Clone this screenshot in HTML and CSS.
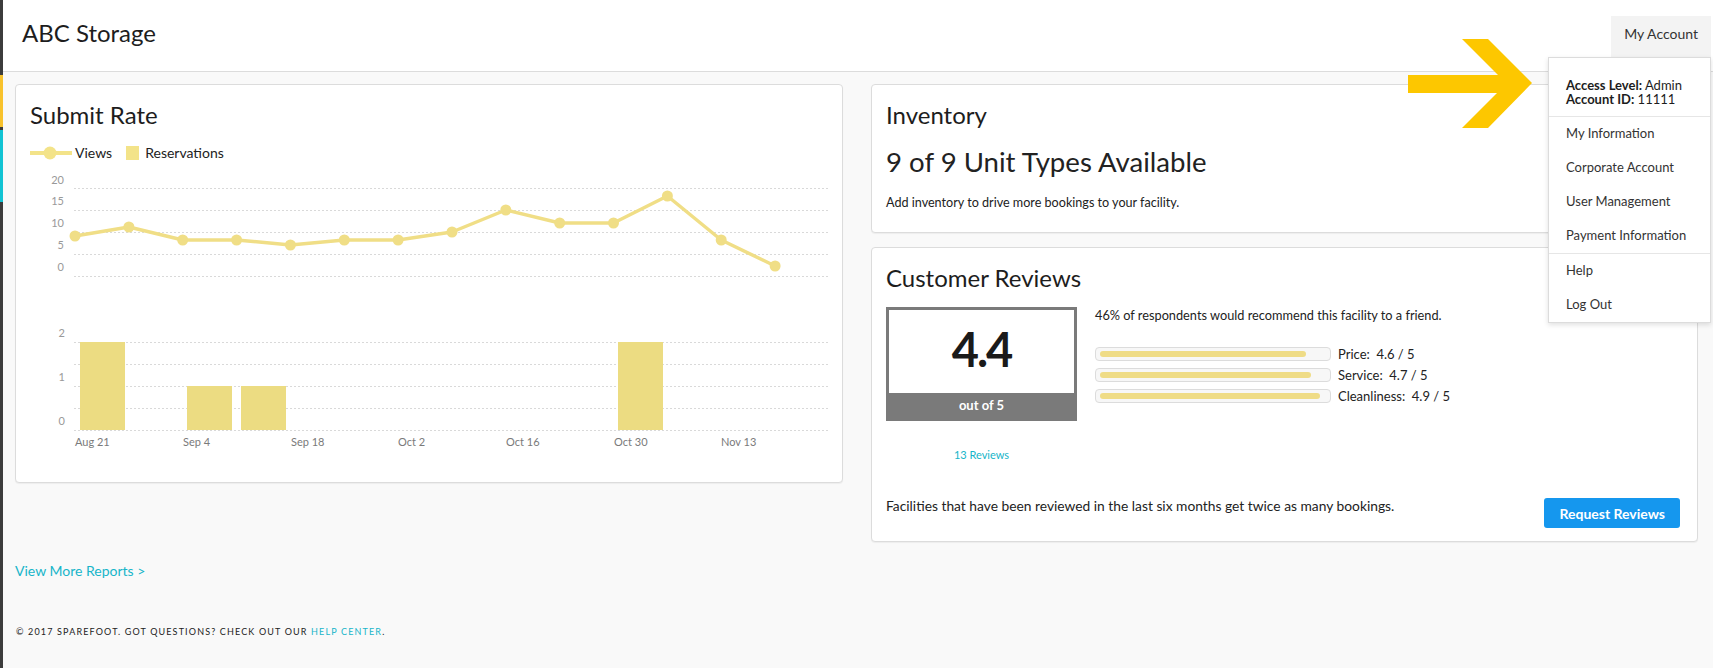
FILE: index.html
```html
<!DOCTYPE html>
<html lang="en">
<head>
  <meta charset="UTF-8">
  <title>ABC Storage - Dashboard</title>
  <link rel="stylesheet" href="styles.css">
</head>
<body>

<div class="app">
  <div class="rail">
    <span class="rail-yellow"></span>
    <span class="rail-cyan"></span>
  </div>

  <div class="main">
    <header class="topbar">
      <h1 class="brand">ABC Storage</h1>
      <div class="account-tab">My Account</div>
    </header>

    <div class="content">
      <div class="columns">
        <section class="card chart-card">
          <h2>Submit Rate</h2>
          <div class="legend">
            <svg class="legend-line" width="42" height="16" viewBox="0 0 42 16">
              <line x1="0" y1="8" x2="42" y2="8" stroke="#f3e389" stroke-width="4"/>
              <circle cx="20" cy="8" r="6.5" fill="#f3e389"/>
            </svg>
            <span>Views</span>
            <span class="legend-box"></span>
            <span>Reservations</span>
          </div>

          <svg class="chart" width="798" height="288" viewBox="0 0 798 288">
            <g class="grid">
              <line x1="44" y1="21.5" x2="798" y2="21.5"/>
              <line x1="44" y1="43.5" x2="798" y2="43.5"/>
              <line x1="44" y1="65.5" x2="798" y2="65.5"/>
              <line x1="44" y1="87.5" x2="798" y2="87.5"/>
              <line x1="44" y1="109.5" x2="798" y2="109.5"/>
              <line x1="44" y1="175.5" x2="798" y2="175.5"/>
              <line x1="44" y1="197.5" x2="798" y2="197.5"/>
              <line x1="44" y1="219.5" x2="798" y2="219.5"/>
              <line x1="44" y1="241.5" x2="798" y2="241.5"/>
              <line x1="44" y1="263.5" x2="798" y2="263.5"/>
            </g>
            <g class="y-labels">
              <text x="34" y="17">20</text>
              <text x="34" y="38">15</text>
              <text x="34" y="60">10</text>
              <text x="34" y="82">5</text>
              <text x="34" y="104">0</text>
              <text x="35" y="170">2</text>
              <text x="35" y="214">1</text>
              <text x="35" y="258">0</text>
            </g>

            <!-- views -->
            <polyline class="views-line" points="45,69 98.9,60 152.7,73 206.6,73 260.4,78 314.3,73 368.1,73 422,65 475.8,43 529.7,56 583.5,56 637.4,29 691.2,73 745.1,99"/>
            <g class="views-dots">
              <circle cx="45" cy="69" r="5.5"/>
              <circle cx="98.9" cy="60" r="5.5"/>
              <circle cx="152.7" cy="73" r="5.5"/>
              <circle cx="206.6" cy="73" r="5.5"/>
              <circle cx="260.4" cy="78" r="5.5"/>
              <circle cx="314.3" cy="73" r="5.5"/>
              <circle cx="368.1" cy="73" r="5.5"/>
              <circle cx="422" cy="65" r="5.5"/>
              <circle cx="475.8" cy="43" r="5.5"/>
              <circle cx="529.7" cy="56" r="5.5"/>
              <circle cx="583.5" cy="56" r="5.5"/>
              <circle cx="637.4" cy="29" r="5.5"/>
              <circle cx="691.2" cy="73" r="5.5"/>
              <circle cx="745.1" cy="99" r="5.5"/>
            </g>

            <!-- reservations -->
            <g class="bars">
              <rect x="50" y="175" width="45" height="88"/>
              <rect x="157" y="219" width="45" height="44"/>
              <rect x="211" y="219" width="45" height="44"/>
              <rect x="588" y="175" width="45" height="88"/>
            </g>

            <g class="x-labels">
              <text x="45" y="279">Aug 21</text>
              <text x="153" y="279">Sep 4</text>
              <text x="261" y="279">Sep 18</text>
              <text x="368" y="279">Oct 2</text>
              <text x="476" y="279">Oct 16</text>
              <text x="584" y="279">Oct 30</text>
              <text x="691" y="279">Nov 13</text>
            </g>
          </svg>
        </section>

        <div class="stack">
          <section class="card inventory-card">
            <h2>Inventory</h2>
            <p class="big-stat">9 of 9 Unit Types Available</p>
            <p class="note">Add inventory to drive more bookings to your facility.</p>
          </section>

          <section class="card reviews-card">
            <h2>Customer Reviews</h2>
            <div class="review-body">
              <div class="score-col">
                <div class="score-box">
                  <div class="score-value">4.4</div>
                  <div class="score-label">out of 5</div>
                </div>
                <a class="reviews-link" href="#">13 Reviews</a>
              </div>
              <div class="review-stats">
                <p class="recommend">46% of respondents would recommend this facility to a friend.</p>
                <div class="ratings">
                  <div class="rating-row">
                    <div class="track"><div class="fill" style="width: 92%"></div></div>
                    <span>Price:&nbsp; 4.6 / 5</span>
                  </div>
                  <div class="rating-row">
                    <div class="track"><div class="fill" style="width: 94%"></div></div>
                    <span>Service:&nbsp; 4.7 / 5</span>
                  </div>
                  <div class="rating-row">
                    <div class="track"><div class="fill" style="width: 98%"></div></div>
                    <span>Cleanliness:&nbsp; 4.9 / 5</span>
                  </div>
                </div>
              </div>
            </div>
            <div class="review-foot">
              <p>Facilities that have been reviewed in the last six months get twice as many bookings.</p>
              <button class="btn">Request Reviews</button>
            </div>
          </section>
        </div>
      </div>

      <a class="more-link" href="#">View More Reports &gt;</a>
      <p class="copyright">&copy; 2017 SpareFoot. Got questions? Check out our <a href="#">Help Center</a>.</p>
    </div>
  </div>
</div>

<div class="account-menu">
  <div class="menu-head">
    <div><b>Access Level:</b> Admin</div>
    <div><b>Account ID:</b> 11111</div>
  </div>
  <div class="menu-group">
    <a href="#">My Information</a>
    <a href="#">Corporate Account</a>
    <a href="#">User Management</a>
    <a href="#">Payment Information</a>
  </div>
  <div class="menu-group">
    <a href="#">Help</a>
    <a href="#">Log Out</a>
  </div>
</div>

<svg class="pointer-arrow" width="140" height="96" viewBox="0 0 140 96">
  <polygon points="8,39 98,39 62,3 88,3 132,47 88,92 62,92 97,57 8,57" fill="#fdc700"/>
</svg>

</body>
</html>
```

FILE: styles.css
```css
* { box-sizing: border-box; }
body { margin: 0; font-family: Lato, "Open Sans", Arial, sans-serif; color: #222; background: #f9f9f9; position: relative; }

.app { display: flex; min-height: 668px; }
.rail { width: 3px; flex: none; background: #3c3c3c; }
.rail-yellow { display: block; height: 52px; margin-top: 75px; background: #f8c22c; }
.rail-cyan { display: block; height: 72px; margin-top: 3px; background: #12c3d3; }
.main { flex: 1; min-width: 0; }

.topbar { display: flex; justify-content: space-between; align-items: flex-start; height: 72px; padding-left: 19px; background: #fff; border-bottom: 1px solid #dcdcdc; }
.brand { margin: 19px 0 0; font-size: 24px; font-weight: 400; line-height: 1.2; color: #1d1d1d; }
.account-tab { margin: 16px 2px 0 0; height: 41px; padding: 0 13px; line-height: 36px; font-size: 14px; color: #333; background: #f3f3f3; }

.content { padding: 12px 15px 0 12px; }
.columns { display: grid; grid-template-columns: 1fr 1fr; gap: 28px; align-items: start; }
.stack { display: flex; flex-direction: column; gap: 14px; }

.card { background: #fff; border: 1px solid #dcdcdc; border-radius: 4px; padding: 16px 14px; box-shadow: 0 1px 1px rgba(0,0,0,0.05); }
.card h2 { margin: 0; font-size: 24px; font-weight: 400; line-height: 1.2; color: #1d1d1d; }

/* submit rate */
.chart-card { padding-bottom: 27px; }
.legend { display: flex; align-items: center; height: 20px; margin-top: 13px; font-size: 14px; }
.legend-line { margin-right: 3px; }
.legend-box { width: 13px; height: 14px; margin: 0 6px 0 14px; background: #f3e389; }
.chart { display: block; margin-top: 4px; font-family: Lato, Arial, sans-serif; }
.chart .grid line { stroke: #d9d9d9; stroke-width: 1; stroke-dasharray: 2 2; }
.chart .y-labels text { font-size: 11px; fill: #999; text-anchor: end; }
.chart .x-labels text { font-size: 11px; fill: #7a7a7a; }
.views-line { fill: none; stroke: #f0de86; stroke-width: 3.5; stroke-linejoin: round; }
.views-dots circle { fill: #f0de86; }
.bars rect { fill: #ecdc82; }

/* inventory */
.inventory-card { padding-bottom: 21px; }
.big-stat { margin: 15px 0 0; font-size: 27.6px; line-height: 1.2; }
.note { margin: 17px 0 0; font-size: 12.6px; line-height: 1.25; }

/* reviews */
.reviews-card { padding: 16px 14px 13px; }
.review-body { display: flex; gap: 18px; margin-top: 15px; }
.score-col { width: 191px; flex: none; text-align: center; }
.score-box { display: flex; flex-direction: column; height: 114px; border: 3px solid #7a7a7a; }
.score-value { flex: 1; display: flex; align-items: center; justify-content: center; padding-bottom: 4px; font-size: 47px; font-weight: 700; line-height: 1; letter-spacing: -2px; color: #1a1a1a; }
.score-label { height: 25px; line-height: 25px; font-size: 13px; font-weight: 700; color: #fff; background: #7a7a7a; }
.reviews-link { display: inline-block; margin-top: 27px; font-size: 11px; line-height: 13px; color: #17b5c9; text-decoration: none; }
.review-stats { flex: 1; font-size: 13px; }
.recommend { margin: 0; font-size: 12.75px; line-height: 16px; }
.ratings { margin-top: 20px; }
.rating-row { display: flex; align-items: center; height: 21px; }
.track { width: 236px; height: 14px; padding: 3px 6px 3px 4px; margin-right: 7px; background: #f7f7f7; border: 1px solid #dcdcdc; border-radius: 4px; }
.fill { height: 6px; border-radius: 3px; background: #efdc86; }
.review-foot { display: flex; justify-content: space-between; align-items: flex-start; margin-top: 36px; }
.review-foot p { margin: 0; font-size: 13.8px; line-height: 1.2; }
.btn { height: 30px; margin-right: 3px; padding: 0 15px; border: 0; border-radius: 3px; background: #1597ee; color: #fff; font-family: Lato, Arial, sans-serif; font-size: 14px; font-weight: 700; cursor: pointer; }

.more-link { display: inline-block; margin-top: 20px; font-size: 14px; line-height: 17px; color: #17b5c9; text-decoration: none; }
.copyright { margin: 47px 0 0 1px; font-size: 9px; line-height: 11px; letter-spacing: 1.15px; text-transform: uppercase; }
.copyright a { color: #17b5c9; text-decoration: none; }

/* account dropdown */
.account-menu { position: absolute; left: 1548px; top: 57px; width: 163px; background: #fff; border: 1px solid #dcdcdc; box-shadow: 0 2px 5px rgba(0,0,0,0.12); font-size: 13px; color: #333; }
.menu-head { padding: 20px 8px 10px 17px; line-height: 14px; color: #1d1d1d; }
.menu-group { border-top: 1px solid #e6e6e6; }
.menu-group a { display: block; height: 34px; line-height: 32px; padding-left: 17px; color: #333; text-decoration: none; }

.pointer-arrow { position: absolute; left: 1400px; top: 36px; }
```
